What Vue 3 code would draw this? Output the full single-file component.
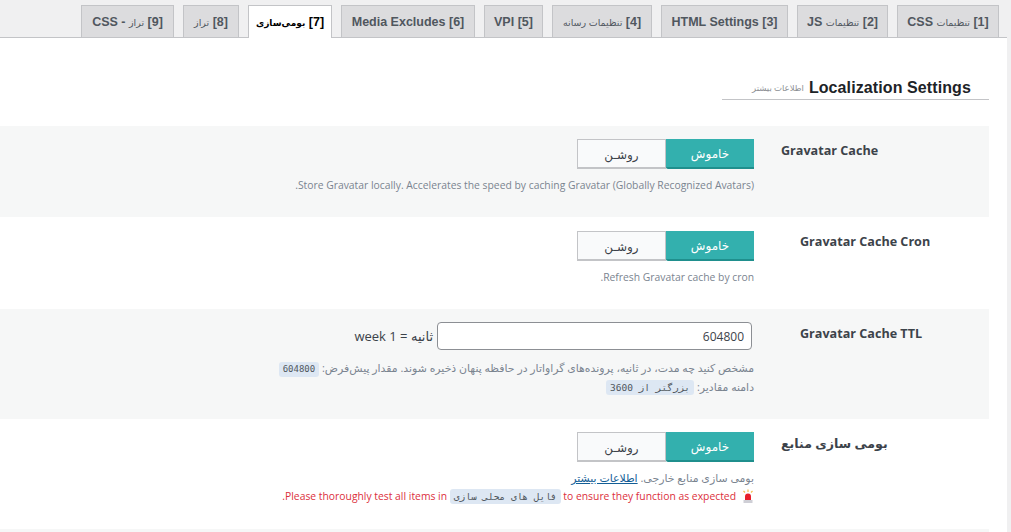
<script setup>
const tabs = [
  { n: 1, fa: 'تنظیمات', en: 'CSS', w: 102 },
  { n: 2, fa: 'تنظیمات', en: 'JS', w: 91 },
  { n: 3, en: 'HTML Settings', w: 127 },
  { n: 4, fa: 'تنظیمات رسانه', w: 100 },
  { n: 5, en: 'VPI', w: 59 },
  { n: 6, en: 'Media Excludes', w: 134 },
  { n: 7, fa: 'بومی‌سازی', w: 84, active: true },
  { n: 8, fa: 'تراز', w: 56 },
  { n: 9, fa: 'تراز', en: '- CSS', w: 93 },
]
</script>

<template>
  <div class="page" dir="rtl">
    <nav class="tabs">
      <a
        v-for="tab in tabs"
        :key="tab.n"
        class="tab"
        :class="{ active: tab.active }"
        :style="{ width: tab.w + 'px' }"
      >[{{ tab.n }}] <span v-if="tab.fa" class="fa">{{ tab.fa }}</span> {{ tab.en }}</a>
    </nav>
    <main class="panel">
      <div class="heading">
        <h2>Localization Settings</h2>
        <a class="more">اطلاعات بیشتر</a>
      </div>

      <section class="row shaded r1">
        <div class="label wide">Gravatar Cache</div>
        <div class="control">
          <div class="toggle"><span class="on">خاموش</span><span class="off">روشـن</span></div>
          <p class="desc d1">Store Gravatar locally. Accelerates the speed by caching Gravatar (Globally Recognized Avatars).</p>
        </div>
      </section>

      <section class="row r2">
        <div class="label narrow">Gravatar Cache Cron</div>
        <div class="control c2">
          <div class="toggle"><span class="on">خاموش</span><span class="off">روشـن</span></div>
          <p class="desc d1">Refresh Gravatar cache by cron.</p>
        </div>
      </section>

      <section class="row shaded r3">
        <div class="label narrow">Gravatar Cache TTL</div>
        <div class="control">
          <div class="ttl">
            <input class="num" dir="rtl" value="604800" />
            <span class="unit">ثانیه = 1 week</span>
          </div>
          <p class="desc persian d2">مشخص کنید چه مدت، در ثانیه، پرونده‌های گراواتار در حافظه پنهان ذخیره شوند. مقدار پیش‌فرض: <code class="plain">604800</code></p>
          <p class="desc persian d3">دامنه مقادیر: <code>بزرگتر از 3600</code></p>
        </div>
      </section>

      <section class="row r4">
        <div class="label wide">بومی سازی منابع</div>
        <div class="control">
          <div class="toggle"><span class="on">خاموش</span><span class="off">روشـن</span></div>
          <p class="desc persian d4">بومی سازی منابع خارجی. <a class="link">اطلاعات بیشتر</a></p>
          <p class="desc warn">
            <svg class="alarm" width="12" height="14" viewBox="0 0 12 14">
              <path d="M3 7.500a3 3 0 0 1 6 0V11H3z" fill="#e8202c" />
              <rect x="1.500" y="11" width="9" height="3" fill="#cfcfd6" />
              <path d="M6 .5v2.500M1.500 2l1.500 1.500M10.500 2L9 3.500" stroke="#f4c04e" stroke-width="1.200" fill="none" />
            </svg>&rlm;to ensure they function as expected&rlm; <code class="wide-code">فایل های محلی سازی</code> &rlm;Please thoroughly test all items in.
          </p>
        </div>
      </section>

      <div class="tail"></div>
    </main>
  </div>
</template>

<style>
html, body {
  margin: 0;
  background: #f0f0f1;
  overflow: hidden;
}
</style>

<style scoped>
.page {
  width: 1011px;
  height: 532px;
  overflow: hidden;
  font-family: "Open Sans", "DejaVu Sans", sans-serif;
  color: #3c434a;
}
.tabs {
  display: flex;
  gap: 9px;
  box-sizing: border-box;
  height: 38px;
  margin-right: 4px;
  padding: 5px 8px 0 0;
  border-bottom: 1px solid #c3c4c7;
}
.tab {
  box-sizing: border-box;
  flex: none;
  height: 32px;
  border: 1px solid #c3c4c7;
  border-bottom: 0;
  background: #dcdcde;
  color: #50575e;
  font: bold 12.5px/32px "Liberation Sans", "DejaVu Sans", sans-serif;
  text-align: center;
  white-space: nowrap;
}
.tab .fa {
  font-size: 9.5px;
  font-weight: 400;
}
.tab.active {
  background: #fff;
  color: #000;
  height: 33px;
}
.tab.active .fa {
  font-size: 9px;
  font-weight: 700;
}
.panel {
  margin-right: 4px;
  background: #fff;
}
.heading {
  display: flex;
  align-items: center;
  gap: 5px;
  box-sizing: border-box;
  width: 267px;
  height: 62px;
  margin-right: 18px;
  padding: 38px 18px 0 0;
  border-bottom: 1px solid #c3c4c7;
}
.heading h2 {
  margin: 0;
  direction: ltr;
  font: bold 16px/23px "Liberation Sans", sans-serif;
  letter-spacing: 0.1px;
  color: #1d2327;
}
.more {
  font-size: 8.5px;
  color: #8c8f94;
}
.row {
  display: flex;
  box-sizing: border-box;
  margin-right: 18px;
}
.r1 { height: 91px; margin-top: 26px; }
.r2 { height: 92px; }
.r3 { height: 110px; }
.r4 { height: 110px; }
.shaded { background: #f6f7f7; }
.label {
  box-sizing: border-box;
  flex: none;
  width: 235px;
  padding-top: 16px;
  font-size: 12.6px;
  font-weight: 700;
  line-height: 18px;
  color: #3c434a;
  white-space: nowrap;
  text-align: left;
}
.label.wide { padding-left: 27px; }
.label.narrow { padding-left: 46px; }
.control { padding-top: 13px; }
.c2 { padding-top: 14px; }
.toggle {
  display: flex;
  height: 30px;
}
.toggle span {
  box-sizing: border-box;
  display: block;
  text-align: center;
  font-size: 12px;
}
.on {
  width: 88px;
  background: #33b0ae;
  color: #fff;
  border-bottom: 2px solid #1f8f8d;
  border-radius: 0 0 0 2px;
  line-height: 30px;
}
.off {
  width: 89px;
  background: #f9fafb;
  color: #3c434a;
  border: 1px solid #c3c4c7;
  border-bottom-width: 2px;
  line-height: 30px;
}
.desc {
  margin: 0;
  font-size: 10.35px;
  line-height: 18px;
  color: #7a8490;
  white-space: nowrap;
}
.persian { font-size: 10.9px; }
.d1 { margin-top: 7px; }
.d2 { margin-top: 9px; }
.d3 { margin-top: 1px; }
.d4 { margin-top: 7px; }
.warn { margin-top: 0; color: #dc2f3c; }
.alarm { vertical-align: -3px; margin-left: 6px; }
.link { color: #135e96; text-decoration: underline; }
code {
  display: inline-block;
  padding: 0 4px;
  border-radius: 3px;
  background: #dde7f3;
  font: 9.5px/15px "DejaVu Sans Mono", "DejaVu Sans", monospace;
  letter-spacing: 0.6px;
  color: #50575e;
}
code.plain { letter-spacing: 0; font-size: 9px; }
code.wide-code { letter-spacing: 1px; }
.ttl {
  display: flex;
  align-items: center;
  gap: 4px;
  height: 28px;
  margin-right: 2px;
}
.num {
  box-sizing: border-box;
  width: 315px;
  height: 28px;
  padding: 0 7px;
  border: 1px solid #8c8f94;
  border-radius: 4px;
  background: #fff;
  font-family: inherit;
  font-size: 12px;
  color: #3c434a;
  outline: none;
}
.unit {
  font-size: 13px;
  color: #3c434a;
  white-space: nowrap;
}
.tail {
  height: 20px;
  margin-right: 18px;
  background: #f6f7f7;
}
</style>
